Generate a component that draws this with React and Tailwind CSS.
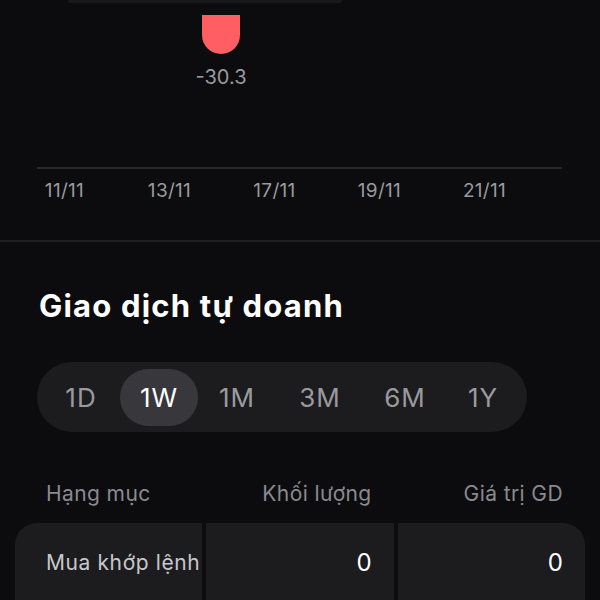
const dates = ["11/11", "13/11", "17/11", "19/11", "21/11"];

const ranges = [
  { label: "1D", w: "w-[78px]" },
  { label: "1W", w: "w-[78px]", active: true },
  { label: "1M", w: "w-[78px]" },
  { label: "3M", w: "w-[88px]" },
  { label: "6M", w: "w-[82px]" },
  { label: "1Y", w: "w-[74px]" },
];

export default function App() {
  return (
    <div
      className="w-[600px] h-[600px] overflow-hidden bg-[#0c0c0e] text-white"
      style={{ fontFamily: "Inter, 'Noto Sans', sans-serif" }}
    >
      {/* chart */}
      <div className="ml-[68px] w-[274px] h-[3px] rounded-b-md bg-[#19191b]" />
      <div className="relative h-[164px]">
        <div className="absolute left-[202px] top-[12px] w-[38px] h-[39px] rounded-b-full bg-[#ff5e62]" />
        <div className="absolute left-[171px] top-[60px] w-[100px] text-center text-[20px] leading-[28px] text-[#9a9a9e]">
          -30.3
        </div>
      </div>
      <div className="ml-[37px] w-[525px] h-[2px] bg-[#29292b]" />
      <div className="flex h-[44px] items-center pl-[12px]">
        {dates.map((d) => (
          <div key={d} className="w-[105px] text-center text-[19px] tracking-[0.3px] text-[#9a9a9e]">
            {d}
          </div>
        ))}
      </div>
      <div className="mt-[27px] h-[2px] bg-[#1e1e20]" />

      {/* proprietary trading */}
      <h2 className="mt-[46px] ml-[39px] h-[36px] text-[31px] leading-[36px] tracking-[1.2px] font-bold">
        Giao dịch tự doanh
      </h2>
      <div className="mt-[38px] ml-[37px] flex h-[70px] w-[490px] items-center rounded-full bg-[#1c1c1f] pl-[5px]">
        {ranges.map((r) => (
          <div
            key={r.label}
            className={`${r.w} flex h-[57px] items-center justify-center rounded-full text-[26px] tracking-[1px] ${
              r.active ? "bg-[#38383c] text-white" : "text-[#9a9a9e]"
            }`}
          >
            {r.label}
          </div>
        ))}
      </div>

      <div className="mt-[46px] mx-[15px] grid h-[30px] grid-cols-3 gap-[4px] items-center text-[21px] tracking-[0.4px] text-[#8a8a8e]">
        <div className="pl-[31px]">Hạng mục</div>
        <div className="pr-[22px] text-right">Khối lượng</div>
        <div className="pr-[22px] text-right">Giá trị GD</div>
      </div>

      <div className="mt-[15px] mx-[15px] grid grid-cols-3 gap-[4px] overflow-hidden rounded-t-[22px]">
        <div className="flex h-[80px] items-center bg-[#1c1c1e] pl-[31px] text-[21px] tracking-[0.6px] whitespace-nowrap text-[#c7c7cc]">
          Mua khớp lệnh
        </div>
        <div className="flex h-[80px] items-center justify-end bg-[#1c1c1e] pr-[22px] text-[24px]">
          0
        </div>
        <div className="flex h-[80px] items-center justify-end bg-[#1c1c1e] pr-[22px] text-[24px]">
          0
        </div>
      </div>
    </div>
  );
}
